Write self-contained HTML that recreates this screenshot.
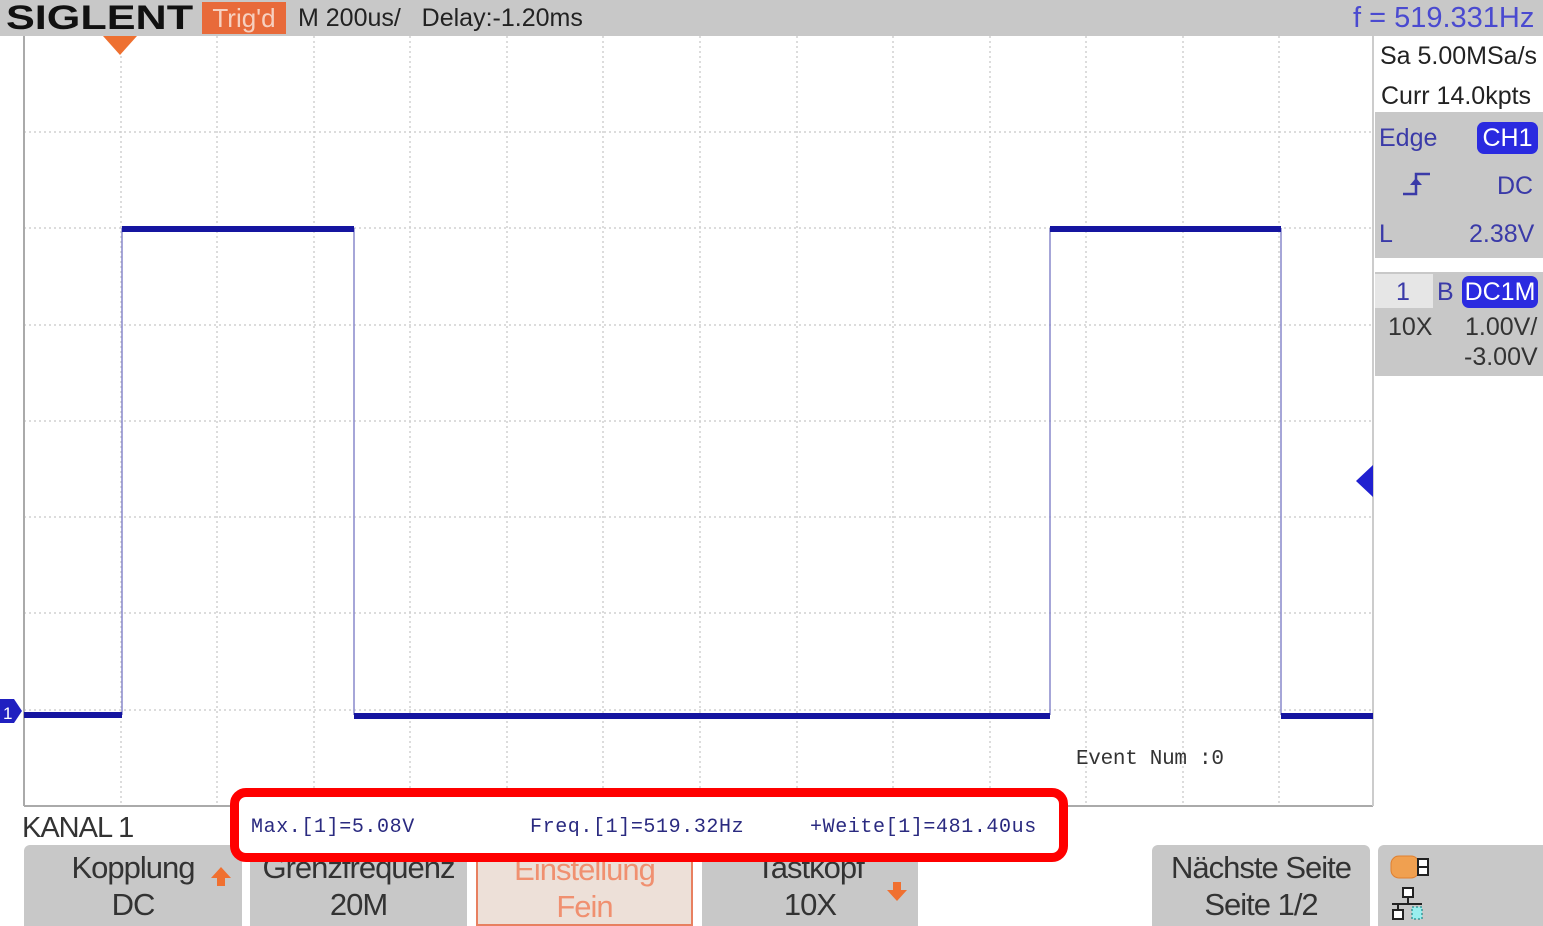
<!DOCTYPE html>
<html><head><meta charset="utf-8"><style>
body{margin:0;width:1543px;height:926px;overflow:hidden;background:#fff;font-family:"Liberation Sans",sans-serif;position:relative}
.a{position:absolute;white-space:nowrap}
.btn{position:absolute;top:845px;height:81px;background:#c8c8c8;border-radius:6px 6px 0 0;text-align:center;font-size:31px;line-height:37px;color:#333;padding-top:4px;box-sizing:border-box;letter-spacing:-1px}
.bl{color:#3a3aa8}
.m{font-size:20px;line-height:26px;color:#2a2a80;font-family:'Liberation Mono',monospace;letter-spacing:0.6px}
</style></head><body>
<div class="a" style="left:0;top:0;width:1543px;height:36px;background:#c8c8c8"></div>
<div class="a" style="left:6px;top:0;font-size:34px;font-weight:bold;line-height:36px;color:#111;transform:scaleX(1.27);transform-origin:left">SIGLENT</div>
<div class="a" style="left:202px;top:2px;width:84px;height:32px;background:#e86a3a;color:#f6d0c0;font-size:26px;line-height:32px;text-align:center">Trig'd</div>
<div class="a" style="left:298px;top:0;font-size:25px;line-height:36px;color:#222">M 200us/&nbsp;&nbsp; Delay:-1.20ms</div>
<div class="a bl" style="left:1353px;top:0;font-size:29px;line-height:36px;color:#4a4ad0">f = 519.331Hz</div>

<svg class="a" style="left:0;top:0" width="1543" height="926">
<g stroke="#d0d0d0" stroke-width="1.5" stroke-dasharray="2,3">
<line x1="121" y1="36" x2="121" y2="806"/><line x1="217" y1="36" x2="217" y2="806"/><line x1="314" y1="36" x2="314" y2="806"/><line x1="410" y1="36" x2="410" y2="806"/><line x1="507" y1="36" x2="507" y2="806"/><line x1="603" y1="36" x2="603" y2="806"/><line x1="700" y1="36" x2="700" y2="806"/><line x1="797" y1="36" x2="797" y2="806"/><line x1="893" y1="36" x2="893" y2="806"/><line x1="990" y1="36" x2="990" y2="806"/><line x1="1086" y1="36" x2="1086" y2="806"/><line x1="1183" y1="36" x2="1183" y2="806"/><line x1="1279" y1="36" x2="1279" y2="806"/>
<line x1="24" y1="132" x2="1373" y2="132"/><line x1="24" y1="228" x2="1373" y2="228"/><line x1="24" y1="325" x2="1373" y2="325"/><line x1="24" y1="421" x2="1373" y2="421"/><line x1="24" y1="517" x2="1373" y2="517"/><line x1="24" y1="613" x2="1373" y2="613"/><line x1="24" y1="710" x2="1373" y2="710"/>
</g>
<line x1="24" y1="36" x2="24" y2="806" stroke="#aaa" stroke-width="2"/>
<line x1="24" y1="806" x2="1373" y2="806" stroke="#aaa" stroke-width="2"/>
<line x1="1373" y1="36" x2="1373" y2="806" stroke="#ccc" stroke-width="2"/>
<g stroke="#8888cc" stroke-width="1.5"><line x1="122" y1="228" x2="122" y2="715"/><line x1="354" y1="228" x2="354" y2="715"/><line x1="1050" y1="228" x2="1050" y2="715"/><line x1="1281" y1="228" x2="1281" y2="715"/></g>
<g stroke="#1515a0" stroke-width="6"><line x1="24" y1="715" x2="122" y2="715"/><line x1="122" y1="229" x2="354" y2="229"/><line x1="354" y1="716" x2="1050" y2="716"/><line x1="1050" y1="229" x2="1281" y2="229"/><line x1="1281" y1="716" x2="1373" y2="716"/></g>
<polygon points="103,36 137,36 120,55" fill="#ee7030"/>
<polygon points="0,699 14,699 22,711 14,723 0,723" fill="#2020c0"/>
<text x="3" y="719" font-size="17" fill="#fff" font-family="Liberation Sans">1</text>
<polygon points="1373,465 1373,497 1356,481" fill="#2020d0"/>
</svg>

<div class="a" style="left:1375px;top:112px;width:168px;height:146px;background:#c8c8c8"></div>
<div class="a" style="left:1375px;top:272px;width:168px;height:104px;background:#c8c8c8"></div>
<div class="a" style="left:1375px;top:274px;width:58px;height:34px;background:#e6e6e6"></div>
<div class="a" style="left:1380px;top:40px;font-size:25px;line-height:32px;color:#222">Sa 5.00MSa/s</div>
<div class="a" style="left:1381px;top:80px;font-size:25px;line-height:32px;color:#222">Curr 14.0kpts</div>
<div class="a bl" style="left:1379px;top:122px;font-size:25px;line-height:32px">Edge</div>
<div class="a" style="left:1477px;top:122px;width:61px;height:32px;background:#2a2ae0;border-radius:7px;color:#fff;font-size:25px;line-height:32px;text-align:center">CH1</div>
<svg class="a" style="left:1400px;top:170px" width="36" height="28"><path d="M3 24 H16 V4 H30" stroke="#3a3aa8" stroke-width="2.5" fill="none"/><path d="M10 15 L16 8 L22 15 Z" fill="#3a3aa8"/></svg>
<div class="a bl" style="left:1497px;top:170px;font-size:25px;line-height:32px">DC</div>
<div class="a bl" style="left:1379px;top:218px;font-size:25px;line-height:32px">L</div>
<div class="a bl" style="left:1469px;top:218px;font-size:25px;line-height:32px">2.38V</div>
<div class="a bl" style="left:1396px;top:276px;font-size:25px;line-height:32px">1</div>
<div class="a bl" style="left:1437px;top:276px;font-size:25px;line-height:32px">B</div>
<div class="a" style="left:1462px;top:276px;width:76px;height:32px;background:#2a2ae0;border-radius:7px;color:#fff;font-size:25px;line-height:32px;text-align:center">DC1M</div>
<div class="a" style="left:1388px;top:311px;font-size:25px;line-height:32px;color:#333">10X</div>
<div class="a" style="left:1465px;top:311px;font-size:25px;line-height:32px;color:#333">1.00V/</div>
<div class="a" style="left:1464px;top:341px;font-size:25px;line-height:32px;color:#333">-3.00V</div>

<div class="a" style="left:1076px;top:748px;font-size:21px;color:#333;font-family:'Liberation Mono',monospace;letter-spacing:-0.3px">Event Num :0</div>
<div class="a" style="left:22px;top:810px;font-size:29px;line-height:36px;color:#333;letter-spacing:-1px">KANAL 1</div>

<div class="btn" style="left:24px;width:218px">Kopplung<br>DC</div>
<div class="btn" style="left:250px;width:217px">Grenzfrequenz<br>20M</div>
<div class="btn" style="left:476px;width:217px;background:#ede0d8;border:2px solid #e88060;color:#f09070">Einstellung<br>Fein</div>
<div class="btn" style="left:702px;width:216px">Tastkopf<br>10X</div>
<svg class="a" style="left:886px;top:880px" width="22" height="22"><path d="M7 2 H15 V10 H21 L11 21 L1 10 H7 Z" fill="#f07030"/></svg>
<svg class="a" style="left:210px;top:866px" width="22" height="22"><path d="M7 20 H15 V12 H21 L11 1 L1 12 H7 Z" fill="#f07030"/></svg>
<div class="btn" style="left:1152px;width:218px">Nächste Seite<br>Seite 1/2</div>
<div class="a" style="left:1378px;top:845px;width:165px;height:81px;background:#c8c8c8;border-radius:6px 0 0 0"></div>
<svg class="a" style="left:1388px;top:852px" width="50" height="70"><rect x="3" y="4" width="28" height="22" rx="8" fill="#f0a050" stroke="#e08030"/><rect x="30" y="7" width="10" height="16" fill="#fff" stroke="#222" stroke-width="2"/><line x1="30" y1="15" x2="40" y2="15" stroke="#222" stroke-width="2"/><rect x="15" y="36" width="10" height="9" fill="#fff" stroke="#222" stroke-width="2"/><path d="M20 45 V52 M4 52 H34 M10 52 V58" stroke="#222" stroke-width="2"/><rect x="5" y="58" width="10" height="9" fill="#fff" stroke="#222" stroke-width="2"/><rect x="24" y="55" width="10" height="12" fill="#9ee" stroke="#077" stroke-dasharray="2,2"/></svg>

<div class="a" style="left:230px;top:788px;width:820px;height:56px;border:9px solid #f00;border-radius:16px;background:#fff"></div>
<div class="a m" style="left:251px;top:815px">Max.[1]=5.08V</div>
<div class="a m" style="left:530px;top:815px">Freq.[1]=519.32Hz</div>
<div class="a m" style="left:810px;top:815px">+Weite[1]=481.40us</div>
</body></html>
